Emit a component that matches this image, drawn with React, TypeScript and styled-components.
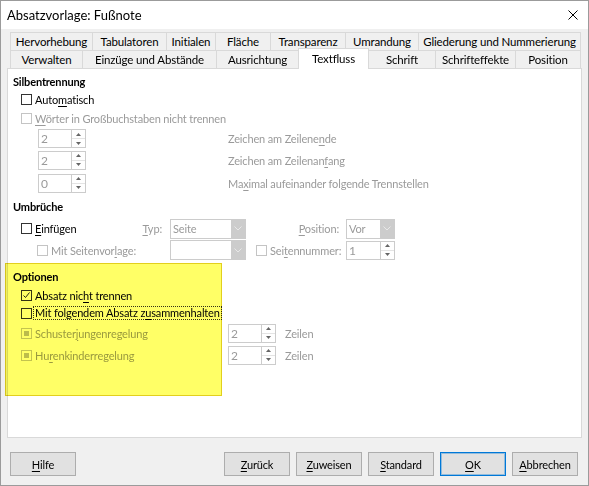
import React from "react";
import styled, { createGlobalStyle } from "styled-components";

const GlobalStyle = createGlobalStyle`
  html, body {
    margin: 0;
    padding: 0;
    background: #ffffff;
  }
  body {
    font-family: Lato, "Noto Sans", sans-serif;
    font-size: 11px;
    letter-spacing: -0.15px;
    color: #000000;
  }
`;

const Window = styled.div`
  width: 589px;
  height: 486px;
  box-sizing: border-box;
  border: 1px solid #9b9b9b;
  background: #f0f0f0;
  display: flex;
  flex-direction: column;
`;

const TitleBar = styled.div`
  height: 28px;
  flex: none;
  background: #ffffff;
  display: flex;
  align-items: center;
  justify-content: space-between;
  padding-left: 6px;
  font-size: 13px;
  letter-spacing: 0;
`;

const CloseButton = styled.div`
  width: 30px;
  height: 28px;
  display: flex;
  align-items: center;
  justify-content: center;
`;

const Body = styled.div`
  flex: 1;
  display: flex;
  flex-direction: column;
  padding: 3px 6px 9px 6px;
`;

const TabStrip = styled.div`
  margin: 0 1px 0 3px;
  display: flex;
  flex-direction: column;
  font-size: 11.5px;
`;

const TabRow = styled.div`
  display: flex;
  height: 18px;
`;

const Tab = styled.div<{ $w: number; $active?: boolean }>`
  width: ${(p) => p.$w + 1}px;
  flex: none;
  box-sizing: border-box;
  margin-right: -1px;
  border: 1px solid #d9d9d9;
  border-bottom: none;
  background: ${(p) => (p.$active ? "#ffffff" : "#f0f0f0")};
  display: flex;
  align-items: center;
  justify-content: center;
  white-space: nowrap;
  position: relative;
  z-index: ${(p) => (p.$active ? 2 : 1)};
  height: ${(p) => (p.$active ? "21px" : "18px")};
  margin-top: ${(p) => (p.$active ? "-2px" : "0")};
  padding-bottom: ${(p) => (p.$active ? "1px" : "0")};
`;

const Panel = styled.div`
  flex: 0 0 370px;
  box-sizing: border-box;
  background: #ffffff;
  border: 1px solid #d9d9d9;
  position: relative;
  display: flex;
  flex-direction: column;
`;

const Section = styled.div<{ $top?: number }>`
  margin-top: ${(p) => p.$top ?? 0}px;
  display: flex;
  flex-direction: column;
`;

const Heading = styled.div<{ $h: number }>`
  height: ${(p) => p.$h}px;
  display: flex;
  align-items: center;
  padding-left: 5px;
  font-weight: 700;
`;

const Line = styled.div<{ $h: number; $indent?: number }>`
  height: ${(p) => p.$h}px;
  display: flex;
  align-items: center;
  padding-left: ${(p) => p.$indent ?? 0}px;
`;

const FieldLine = styled.div<{ $h: number; $cols: string }>`
  height: ${(p) => p.$h}px;
  display: grid;
  grid-template-columns: ${(p) => p.$cols};
  align-items: center;
`;

const Cell = styled.div<{ $left?: number; $right?: number; $spread?: boolean; $end?: boolean }>`
  display: flex;
  align-items: center;
  justify-content: ${(p) => (p.$spread ? "space-between" : p.$end ? "flex-end" : "flex-start")};
  padding-left: ${(p) => p.$left ?? 0}px;
  padding-right: ${(p) => p.$right ?? 0}px;
`;

const Label = styled.span<{ $disabled?: boolean }>`
  color: ${(p) => (p.$disabled ? "#9a9a9a" : "#000000")};
  white-space: nowrap;
`;

const FocusLabel = styled.span`
  border: 1px dotted #333333;
  padding: 0 1px;
  line-height: 12px;
  margin-left: -2px;
  white-space: nowrap;
`;

const Mn = styled.span`
  text-decoration: underline;
  text-underline-offset: 2px;
`;

const CheckRow = styled.label`
  display: flex;
  align-items: center;
  gap: 3px;
`;

const Box = styled.span<{ $disabled?: boolean }>`
  width: 11px;
  height: 11px;
  box-sizing: border-box;
  flex: none;
  border: 1px solid ${(p) => (p.$disabled ? "#c4c4c4" : "#333333")};
  background: #ffffff;
  display: inline-flex;
  align-items: center;
  justify-content: center;
`;

const BoxFill = styled.span`
  width: 5px;
  height: 5px;
  background: #bcbcbc;
`;

const Spin = styled.div<{ $w: number }>`
  width: ${(p) => p.$w}px;
  height: 19px;
  box-sizing: border-box;
  border: 1px solid #cccccc;
  display: flex;
  background: #ffffff;
`;

const SpinValue = styled.div`
  flex: 1;
  color: #9a9a9a;
  padding-left: 2px;
  line-height: 17px;
  font-size: 12px;
`;

const SpinButtons = styled.div`
  width: 13px;
  border-left: 1px solid #cccccc;
  display: flex;
  flex-direction: column;
`;

const SpinHalf = styled.div<{ $bottom?: boolean }>`
  flex: 1;
  display: flex;
  align-items: center;
  justify-content: center;
  border-top: ${(p) => (p.$bottom ? "1px solid #e4e4e4" : "none")};
`;

const Combo = styled.div<{ $w: number }>`
  width: ${(p) => p.$w}px;
  height: 20px;
  box-sizing: border-box;
  border: 1px solid #cccccc;
  display: flex;
  background: #ffffff;
`;

const ComboValue = styled.div`
  flex: 1;
  color: #9a9a9a;
  padding-left: 2px;
  line-height: 18px;
`;

const ComboButton = styled.div`
  width: 14px;
  background: #cccccc;
  display: flex;
  align-items: center;
  justify-content: center;
`;

// marker highlight laid over the "Optionen" group
const Highlight = styled.div`
  position: absolute;
  left: -3px;
  top: 194px;
  width: 217px;
  height: 133px;
  box-sizing: border-box;
  background: #ffff66;
  border: 1px solid #e2cf1e;
  mix-blend-mode: multiply;
  pointer-events: none;
`;

const Footer = styled.div`
  margin-top: 14px;
  height: 24px;
  display: flex;
  align-items: center;
  gap: 6px;
  padding: 0 4px 0 3px;
`;

const Spacer = styled.div`
  flex: 1;
`;

const Button = styled.button<{ $primary?: boolean }>`
  width: 66px;
  height: 24px;
  box-sizing: border-box;
  background: #e1e1e1;
  border: 1px solid ${(p) => (p.$primary ? "#0078d7" : "#adadad")};
  box-shadow: ${(p) => (p.$primary ? "inset 0 0 0 1px rgba(0, 120, 215, 0.35)" : "none")};
  font: inherit;
  letter-spacing: inherit;
  color: #000000;
  padding: 0;
`;

type CheckState = "off" | "on" | "mixed";

const Check = ({
  state = "off",
  disabled,
  children,
}: {
  state?: CheckState;
  disabled?: boolean;
  children: React.ReactNode;
}) => (
  <CheckRow>
    <Box $disabled={disabled}>
      {state === "on" && (
        <svg width="9" height="9" viewBox="0 0 9 9">
          <path d="M1.5 4.5 L3.5 6.5 L7.5 1.5" stroke="#222" strokeWidth="1" fill="none" />
        </svg>
      )}
      {state === "mixed" && <BoxFill />}
    </Box>
    {children}
  </CheckRow>
);

const SpinField = ({ value, w = 48 }: { value: string; w?: number }) => (
  <Spin $w={w}>
    <SpinValue>{value}</SpinValue>
    <SpinButtons>
      <SpinHalf>
        <svg width="5" height="3" viewBox="0 0 5 3">
          <path d="M0 3 L2.5 0 L5 3 Z" fill="#666" />
        </svg>
      </SpinHalf>
      <SpinHalf $bottom>
        <svg width="5" height="3" viewBox="0 0 5 3">
          <path d="M0 0 L5 0 L2.5 3 Z" fill="#666" />
        </svg>
      </SpinHalf>
    </SpinButtons>
  </Spin>
);

const ComboField = ({ value, w }: { value: string; w: number }) => (
  <Combo $w={w}>
    <ComboValue>{value}</ComboValue>
    <ComboButton>
      <svg width="8" height="5" viewBox="0 0 8 5">
        <path d="M0.5 0.5 L4 4 L7.5 0.5" stroke="#e8e8e8" strokeWidth="1" fill="none" />
      </svg>
    </ComboButton>
  </Combo>
);

const topTabs: [string, number][] = [
  ["Hervorhebung", 82],
  ["Tabulatoren", 74],
  ["Initialen", 49],
  ["Fläche", 55],
  ["Transparenz", 75],
  ["Umrandung", 73],
  ["Gliederung und Nummerierung", 162],
];

const bottomTabs: [string, number][] = [
  ["Verwalten", 72],
  ["Einzüge und Abstände", 134],
  ["Ausrichtung", 82],
  ["Textfluss", 70],
  ["Schrift", 67],
  ["Schrifteffekte", 80],
  ["Position", 65],
];

const App = () => (
  <>
    <GlobalStyle />
    <Window>
      <TitleBar>
        <span>Absatzvorlage: Fußnote</span>
        <CloseButton>
          <svg width="10" height="10" viewBox="0 0 10 10">
            <path d="M0.5 0.5 L9.5 9.5 M9.5 0.5 L0.5 9.5" stroke="#000" strokeWidth="1" />
          </svg>
        </CloseButton>
      </TitleBar>

      <Body>
        <TabStrip>
          <TabRow>
            {topTabs.map(([name, w]) => (
              <Tab key={name} $w={w}>
                {name}
              </Tab>
            ))}
          </TabRow>
          <TabRow>
            {bottomTabs.map(([name, w]) => (
              <Tab key={name} $w={w} $active={name === "Textfluss"}>
                {name}
              </Tab>
            ))}
          </TabRow>
        </TabStrip>

        <Panel>
          <Section $top={3}>
            <Heading $h={18}>Silbentrennung</Heading>
            <Line $h={19} $indent={13}>
              <Check>
                <Label>
                  Auto<Mn>m</Mn>atisch
                </Label>
              </Check>
            </Line>
            <Line $h={19} $indent={13}>
              <Check disabled>
                <Label $disabled>
                  <Mn>W</Mn>örter in Großbuchstaben nicht trennen
                </Label>
              </Check>
            </Line>
            <FieldLine $h={21} $cols="220px auto">
              <Cell $left={30}>
                <SpinField value="2" />
              </Cell>
              <Label $disabled>
                Zeichen am Zeilene<Mn>n</Mn>de
              </Label>
            </FieldLine>
            <FieldLine $h={22} $cols="220px auto">
              <Cell $left={30}>
                <SpinField value="2" />
              </Cell>
              <Label $disabled>
                Zeichen am Zeilenan<Mn>f</Mn>ang
              </Label>
            </FieldLine>
            <FieldLine $h={24} $cols="220px auto">
              <Cell $left={30}>
                <SpinField value="0" />
              </Cell>
              <Label $disabled>
                Ma<Mn>x</Mn>imal aufeinander folgende Trennstellen
              </Label>
            </FieldLine>
          </Section>

          <Section>
            <Heading $h={23}>Umbrüche</Heading>
            <FieldLine $h={21} $cols="162px 76px 100px 49px">
              <Cell $left={13} $right={8} $spread>
                <Check>
                  <Label>
                    <Mn>E</Mn>infügen
                  </Label>
                </Check>
                <Label $disabled>
                  <Mn>T</Mn>yp:
                </Label>
              </Cell>
              <ComboField value="Seite" w={76} />
              <Cell $right={7} $end>
                <Label $disabled>
                  <Mn>P</Mn>osition:
                </Label>
              </Cell>
              <ComboField value="Vor" w={49} />
            </FieldLine>
            <FieldLine $h={22} $cols="162px 76px 100px 49px">
              <Cell $left={29}>
                <Check disabled>
                  <Label $disabled>
                    Mit Seitenvor<Mn>l</Mn>age:
                  </Label>
                </Check>
              </Cell>
              <ComboField value="" w={76} />
              <Cell $left={10}>
                <Check disabled>
                  <Label $disabled>
                    Sei<Mn>t</Mn>ennummer:
                  </Label>
                </Check>
              </Cell>
              <SpinField value="1" w={49} />
            </FieldLine>
          </Section>

          <Section $top={5}>
            <Heading $h={20}>Optionen</Heading>
            <Line $h={18} $indent={13}>
              <Check state="on">
                <Label>
                  Absatz nic<Mn>h</Mn>t trennen
                </Label>
              </Check>
            </Line>
            <Line $h={18} $indent={13}>
              <Check>
                <FocusLabel>
                  Mit folgendem Absatz z<Mn>u</Mn>sammenhalten
                </FocusLabel>
              </Check>
            </Line>
            <FieldLine $h={22} $cols="220px 48px auto">
              <Cell $left={13}>
                <Check state="mixed" disabled>
                  <Label $disabled>
                    Schuster<Mn>j</Mn>ungenregelung
                  </Label>
                </Check>
              </Cell>
              <SpinField value="2" />
              <Cell $left={9}>
                <Label $disabled>Zeilen</Label>
              </Cell>
            </FieldLine>
            <FieldLine $h={22} $cols="220px 48px auto">
              <Cell $left={13}>
                <Check state="mixed" disabled>
                  <Label $disabled>
                    Hu<Mn>r</Mn>enkinderregelung
                  </Label>
                </Check>
              </Cell>
              <SpinField value="2" />
              <Cell $left={9}>
                <Label $disabled>Zeilen</Label>
              </Cell>
            </FieldLine>
          </Section>

          <Highlight />
        </Panel>

        <Footer>
          <Button>
            <Mn>H</Mn>ilfe
          </Button>
          <Spacer />
          <Button>
            <Mn>Z</Mn>urück
          </Button>
          <Button>
            <Mn>Z</Mn>uweisen
          </Button>
          <Button>
            <Mn>S</Mn>tandard
          </Button>
          <Button $primary>
            <Mn>O</Mn>K
          </Button>
          <Button>
            <Mn>A</Mn>bbrechen
          </Button>
        </Footer>
      </Body>
    </Window>
  </>
);

export default App;
